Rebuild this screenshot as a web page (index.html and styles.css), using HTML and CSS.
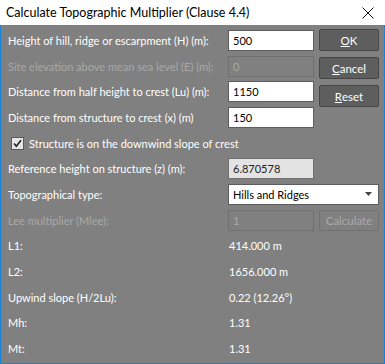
FILE: index.html
```html
<!DOCTYPE html>
<html lang="en">
<head>
    <meta charset="UTF-8">
    <title>Calculate Topographic Multiplier (Clause 4.4)</title>
    <link rel="stylesheet" href="styles.css">
</head>
<body>
    <div class="window">
        <div class="titlebar">
            <span class="title">Calculate Topographic Multiplier (Clause 4.4)</span>
            <svg class="close" width="12" height="12" viewBox="0 0 12 12">
                <path d="M0.5 0.5 L11.5 11.5 M11.5 0.5 L0.5 11.5" stroke="#111" stroke-width="1" fill="none"/>
            </svg>
        </div>
        <div class="content">
            <label class="lbl r1">Height of hill, ridge or escarpment (H) (m):</label>
            <div class="field r1"><span class="input">500</span></div>

            <label class="lbl r2 disabled">Site elevation above mean sea level (E) (m):</label>
            <div class="field r2"><span class="input off">0</span></div>

            <label class="lbl r3">Distance from half height to crest (Lu) (m):</label>
            <div class="field r3"><span class="input">1150</span></div>

            <label class="lbl r4">Distance from structure to crest (x) (m)</label>
            <div class="field r4"><span class="input">150</span></div>

            <div class="buttons">
                <span class="btn"><u>O</u>K</span>
                <span class="btn"><u>C</u>ancel</span>
                <span class="btn"><u>R</u>eset</span>
            </div>

            <div class="check r5">
                <svg class="box" width="13" height="13" viewBox="0 0 13 13">
                    <rect x="0.5" y="0.5" width="12" height="12" fill="#e6e6e6" stroke="#5a5a5a"/>
                    <path d="M3 6.5 L5.3 9.2 L10 3.2" stroke="#222" stroke-width="1.6" fill="none"/>
                </svg>
                <span>Structure is on the downwind slope of crest</span>
            </div>

            <label class="lbl r6">Reference height on structure (z) (m):</label>
            <div class="field r6"><span class="input ro">6.870578</span></div>

            <label class="lbl r7">Topographical type:</label>
            <div class="field wide r7">
                <span class="input select">Hills and Ridges
                    <svg class="arrow" width="7" height="4" viewBox="0 0 7 4"><path d="M0 0 L7 0 L3.5 4 Z" fill="#444"/></svg>
                </span>
            </div>

            <label class="lbl r8 disabled">Lee multiplier (Mlee):</label>
            <div class="field r8"><span class="input off">1</span></div>
            <div class="field r8 c3"><span class="btn off">Calculate</span></div>

            <label class="lbl r9">L1:</label>
            <div class="value r9">414.000 m</div>

            <label class="lbl r10">L2:</label>
            <div class="value r10">1656.000 m</div>

            <label class="lbl r11">Upwind slope (H/2Lu):</label>
            <div class="value r11">0.22 (12.26°)</div>

            <label class="lbl r12">Mh:</label>
            <div class="value r12">1.31</div>

            <label class="lbl r13">Mt:</label>
            <div class="value r13">1.31</div>
        </div>
    </div>
</body>
</html>
```

FILE: styles.css
```css
body {
    margin: 0;
    font-family: Lato, "Liberation Sans", sans-serif;
    font-size: 11px;
}

.window {
    width: 385px;
    height: 364px;
    display: flex;
    flex-direction: column;
}

.titlebar {
    height: 25px;
    background: #ffffff;
    display: flex;
    align-items: center;
    justify-content: space-between;
    padding: 0 11px 0 6px;
    color: #000;
}

.title {
    font-size: 12.5px;
}

.content {
    flex: 1;
    background: #808080;
    border: 1px solid #1883d7;
    border-top: none;
    padding: 5px 6px 0 7px;
    display: grid;
    grid-template-columns: 215px 86px 60px;
    grid-template-rows: repeat(13, 21px);
    column-gap: 5px;
    row-gap: 4.67px;
    color: #ffffff;
}

.lbl {
    grid-column: 1;
    display: flex;
    align-items: center;
    white-space: nowrap;
}

.disabled {
    color: #a9a9a9;
}

.field {
    grid-column: 2;
    display: flex;
}

.field.wide {
    grid-column: 2 / 4;
}

.field.c3 {
    grid-column: 3;
}

.value {
    grid-column: 2 / 4;
    display: flex;
    align-items: center;
    padding-left: 1px;
}

.input {
    flex: 1;
    box-sizing: border-box;
    height: 21px;
    background: #ffffff;
    border: 1px solid #5c5c5c;
    color: #000;
    display: flex;
    align-items: center;
    padding-left: 4px;
}

.input.off {
    background: #808080;
    border-color: #707070;
    color: #a9a9a9;
}

.input.ro {
    background: #e3e3e3;
    border-color: #707070;
    color: #222;
}

.select {
    justify-content: space-between;
    padding-right: 6px;
}

.buttons {
    grid-column: 3;
    grid-row: 1 / 5;
    display: flex;
    flex-direction: column;
    gap: 6px;
    margin-top: -1px;
}

.btn {
    box-sizing: border-box;
    height: 22px;
    width: 60px;
    background: #5e5e5e;
    border: 1px solid #454545;
    border-radius: 2px;
    color: #ffffff;
    font-size: 11.5px;
    display: flex;
    align-items: center;
    justify-content: center;
}

.btn.off {
    background: #808080;
    border-color: #707070;
    color: #a9a9a9;
    height: 21px;
}

.check {
    grid-column: 1 / 4;
    display: flex;
    align-items: center;
    gap: 5px;
    padding-left: 3px;
}

.r1 { grid-row: 1; }
.r2 { grid-row: 2; }
.r3 { grid-row: 3; }
.r4 { grid-row: 4; }
.r5 { grid-row: 5; }
.r6 { grid-row: 6; }
.r7 { grid-row: 7; }
.r8 { grid-row: 8; }
.r9 { grid-row: 9; }
.r10 { grid-row: 10; }
.r11 { grid-row: 11; }
.r12 { grid-row: 12; }
.r13 { grid-row: 13; }
```
